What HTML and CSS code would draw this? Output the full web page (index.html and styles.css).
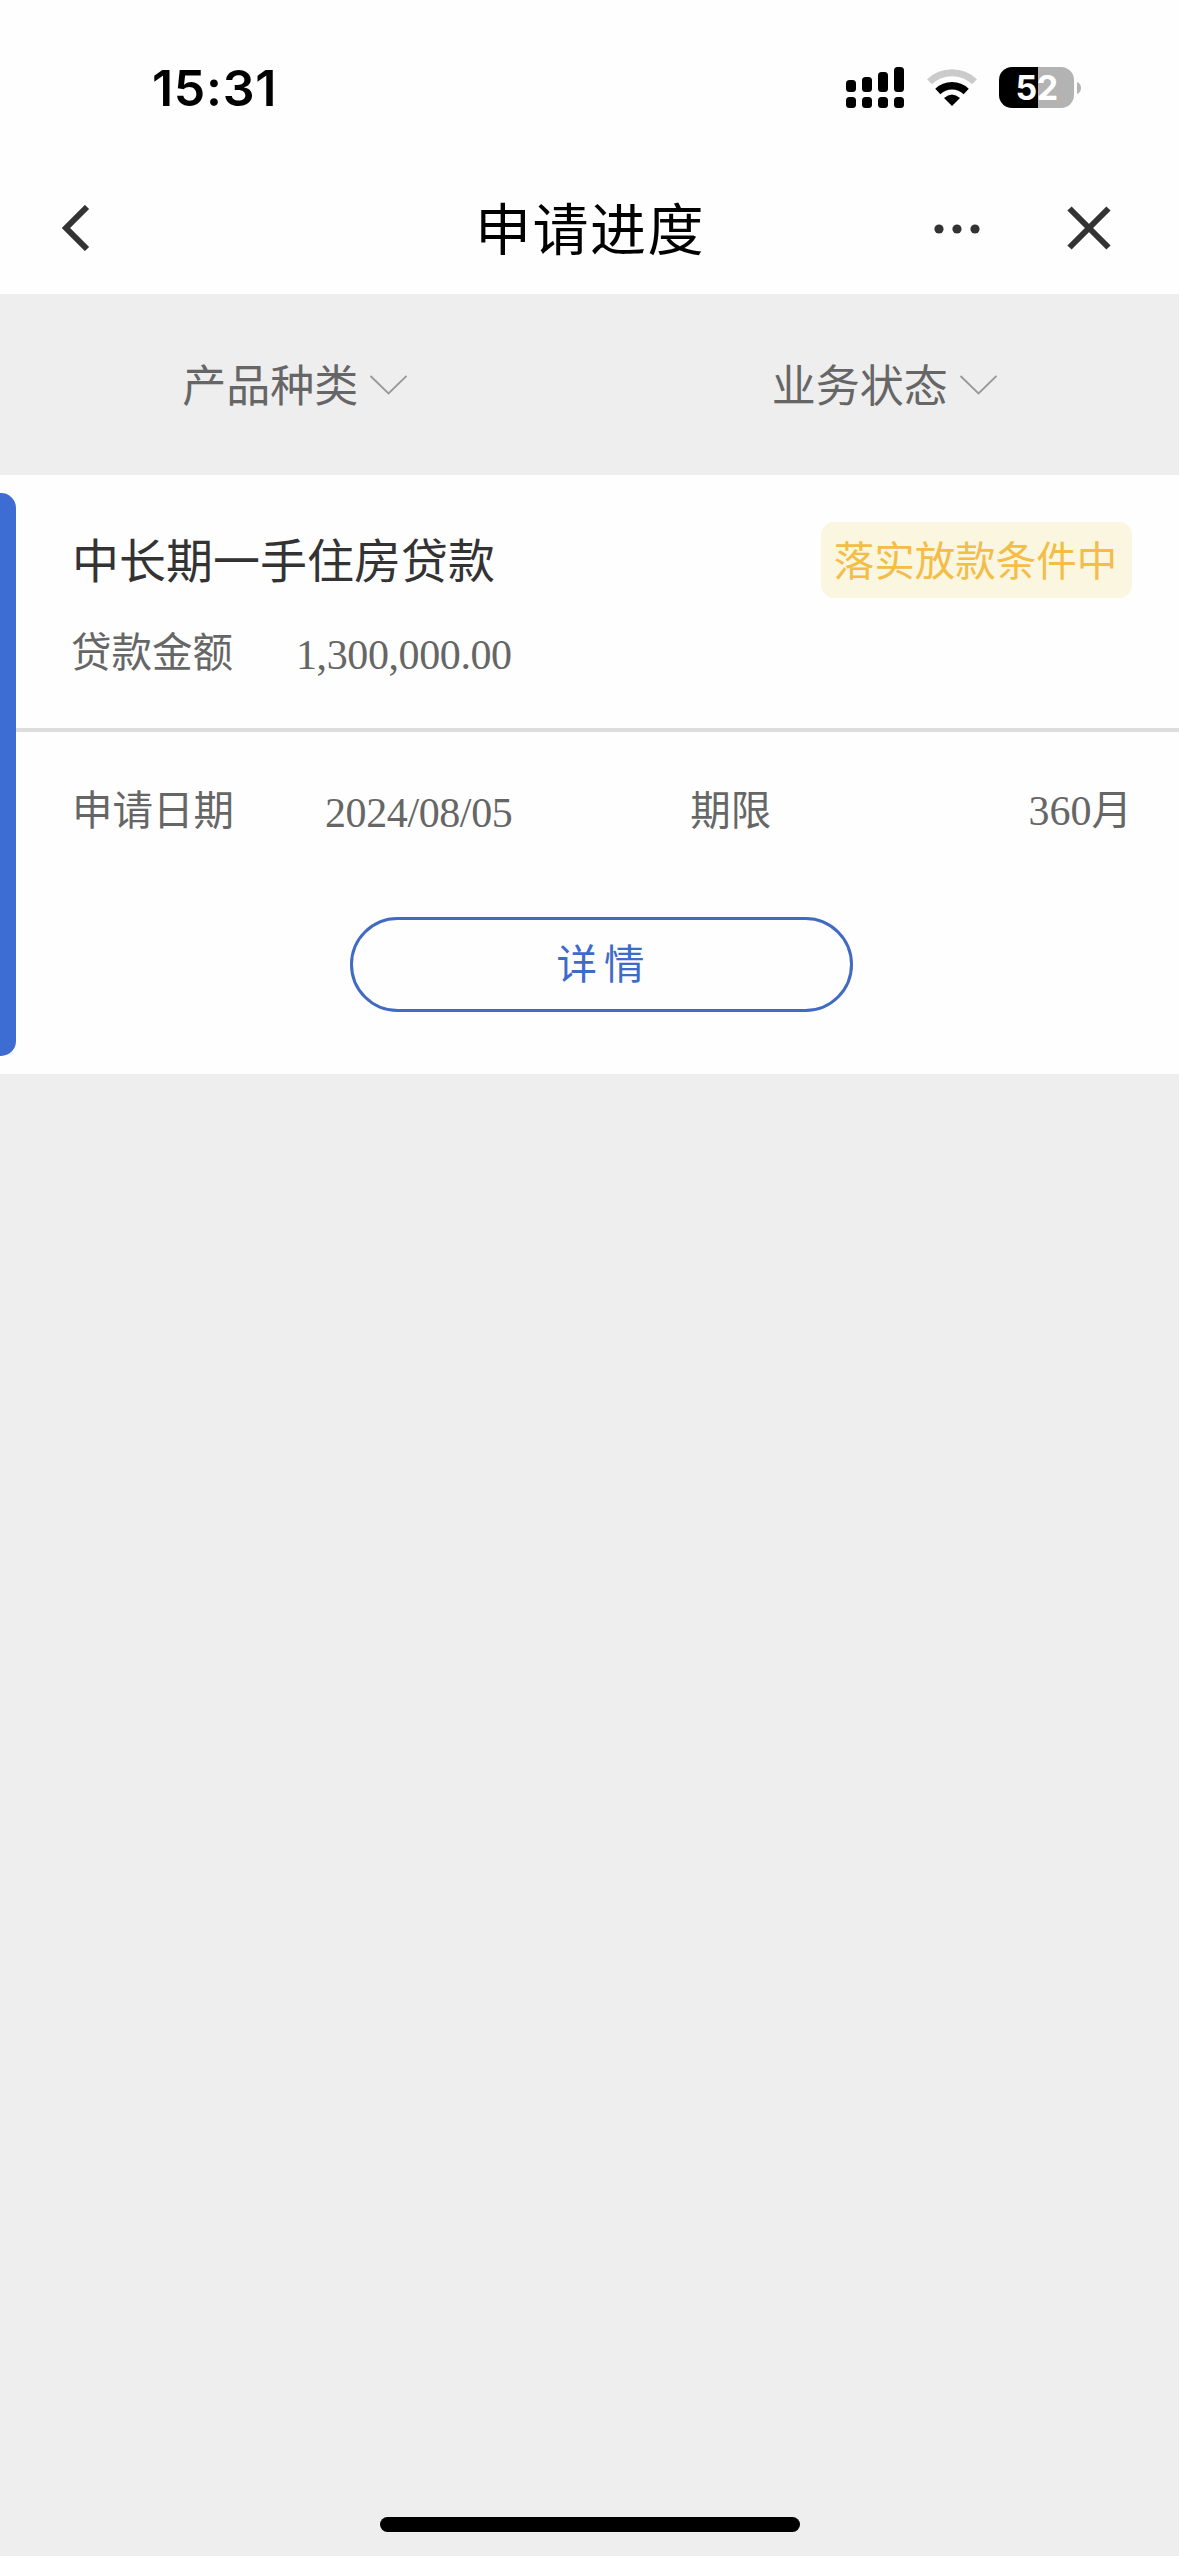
FILE: index.html
```
<!DOCTYPE html>
<html lang="zh-CN">
<head>
<meta charset="UTF-8">
<title>申请进度</title>
<link rel="stylesheet" href="styles.css">
</head>
<body>
<div class="screen">
  <header class="top">
    <div class="status-bar">
      <span class="time">15:31</span>
      <div class="status-icons">
        <svg class="signal" width="58" height="41" viewBox="0 0 58 41">
          <rect x="0" y="13" width="10" height="12" rx="3.5"/>
          <rect x="16" y="10" width="10" height="15" rx="3.5"/>
          <rect x="32" y="5" width="10" height="20" rx="3.5"/>
          <rect x="48" y="0" width="10" height="25" rx="3.5"/>
          <rect x="0" y="30" width="10" height="11" rx="3.5"/>
          <rect x="16" y="30" width="10" height="11" rx="3.5"/>
          <rect x="32" y="30" width="10" height="11" rx="3.5"/>
          <rect x="48" y="30" width="10" height="11" rx="3.5"/>
        </svg>
        <svg class="wifi" width="50" height="38" viewBox="0 0 50 38">
          <path d="M2.500 13.800A32.500 32.500 0 0 1 47.500 13.800" fill="none" stroke="#cbcbcb" stroke-width="7"/>
          <path d="M10.800 23.500A20.500 20.500 0 0 1 39.200 23.500" fill="none" stroke="#000" stroke-width="7.400"/>
          <path d="M25 38L17 30Q25 23 33 30Z"/>
        </svg>
        <div class="battery">
          <span class="battery-body">52</span>
          <svg width="4" height="12" viewBox="0 0 4 12"><path d="M0 0Q4 1.500 4 6T0 12Z" fill="#b3b3b3"/></svg>
        </div>
      </div>
    </div>
    <nav class="nav-bar">
      <svg class="back" width="28" height="46" viewBox="0 0 28 46"><path d="M25 2L4 23L25 44" fill="none" stroke="#333" stroke-width="6"/></svg>
      <h1 class="page-title">申请进度</h1>
      <div class="nav-actions">
        <svg class="more" width="46" height="10" viewBox="0 0 46 10" fill="#333"><circle cx="5" cy="5" r="4.600"/><circle cx="23" cy="5" r="4.600"/><circle cx="41" cy="5" r="4.600"/></svg>
        <svg width="44" height="44" viewBox="0 0 44 44"><path d="M2.500 2.500L41.500 41.500M41.500 2.500L2.500 41.500" stroke="#333" stroke-width="6"/></svg>
      </div>
    </nav>
  </header>
  <div class="filters">
    <div class="filter"><span>产品种类</span><svg width="38" height="20" viewBox="0 0 38 20"><path d="M1.500 1L19.500 18.500L37.500 1" fill="none" stroke="#999" stroke-width="1.800"/></svg></div>
    <div class="filter"><span>业务状态</span><svg width="38" height="20" viewBox="0 0 38 20"><path d="M1.500 1L19.500 18.500L37.500 1" fill="none" stroke="#999" stroke-width="1.800"/></svg></div>
  </div>
  <main class="card">
    <div class="accent"></div>
    <div class="card-body">
      <section class="summary">
        <div class="summary-head">
          <h2 class="product">中长期一手住房贷款</h2>
          <span class="badge">落实放款条件中</span>
        </div>
        <div class="amount-row"><span class="label">贷款金额</span><span class="number">1,300,000.00</span></div>
      </section>
      <section class="details">
        <div class="detail-row">
          <span class="label">申请日期</span><span class="number date">2024/08/05</span>
          <span class="label term-label">期限</span><span class="term"><span class="term-count">360</span>月</span>
        </div>
        <button class="detail-button" type="button">详情</button>
      </section>
    </div>
  </main>
  <div class="home-indicator"></div>
</div>
</body>
</html>
```
FILE: styles.css
```
* { box-sizing: border-box; }
body { margin: 0; background: #eee; font-family: "Noto Sans CJK SC", sans-serif; color: #666; }
svg { display: block; flex: none; }
h1, h2 { margin: 0; font-weight: 400; }
.screen { width: 1179px; height: 2556px; display: flex; flex-direction: column; align-items: stretch; }
.top { height: 294px; background: #fefefe; }
.status-bar { height: 162px; padding: 67px 98px 0 152px; display: flex; justify-content: space-between; align-items: flex-start; }
.time { font: 600 50px/43px Inter, sans-serif; color: #000; letter-spacing: 0.7px; }
.status-icons { display: flex; align-items: flex-start; }
.wifi { margin: 1px 22px 0 23px; }
.battery { display: flex; align-items: center; gap: 3px; }
.battery-body { width: 75px; height: 41px; border-radius: 13px; background: linear-gradient(90deg, #000 39px, #b3b3b3 39px); color: #fff; font: 700 34px/42px Inter, sans-serif; letter-spacing: -0.5px; text-align: center; }
.nav-bar { height: 132px; padding: 0 68px 0 62px; display: grid; grid-template-columns: 300px 1fr 300px; align-items: center; }
.page-title { padding: 0 0 5px 7px; font-size: 56px; line-height: 84px; letter-spacing: 1.5px; color: #000; text-align: center; }
.nav-actions { display: flex; justify-content: flex-end; align-items: center; gap: 87px; }
.more { margin-top: 2px; }
.filters { height: 181px; display: grid; grid-template-columns: 1fr 1fr; }
.filter { display: flex; align-items: center; justify-content: center; gap: 11px; font-size: 44px; line-height: 60px; }
.filter span { padding-bottom: 3px; }
.card { height: 599px; background: #fefefe; display: flex; padding: 18px 0; }
.accent { width: 16px; background: #3d6dd2; border-radius: 0 15px 15px 0; }
.card-body { flex: 1; }
.summary { height: 239px; border-bottom: 4px solid #ddd; padding: 29px 47px 0 55px; }
.summary-head { height: 76px; display: flex; justify-content: space-between; align-items: center; }
.product { padding: 0 0 5px 1px; font-size: 47px; line-height: 70px; color: #333; }
.badge { width: 311px; height: 76px; border-radius: 13px; background: #fbf6e0; color: #f3bd48; font-size: 40.5px; line-height: 74px; text-align: center; text-indent: -2px; }
.amount-row { display: flex; margin-top: 22px; gap: 63px; }
.label, .term { font-size: 40.5px; line-height: 60px; }
.number { font-family: "Liberation Serif", serif; font-size: 42px; line-height: 60px; letter-spacing: -0.4px; padding-top: 5px; }
.details { padding: 45px 47px 0 56px; }
.detail-row { display: flex; height: 66px; padding-top: 1px; }
.date { margin-left: 91px; }
.term-label { margin-left: 178px; }
.term { margin-left: auto; }
.term-count { font-family: "Liberation Serif", serif; font-size: 42px; }
.detail-button { display: block; width: 503px; height: 95px; margin: 74px 0 0 278px; padding: 0 2px 5px 0; border: 3px solid #416ac3; border-radius: 48px; background: transparent; color: #3d6bc9; font: 40.5px/60px "Noto Sans CJK SC", sans-serif; letter-spacing: 7px; text-indent: 7px; }
.home-indicator { width: 420px; height: 15px; margin: auto auto 24px 380px; border-radius: 8px; background: #000; }
```
